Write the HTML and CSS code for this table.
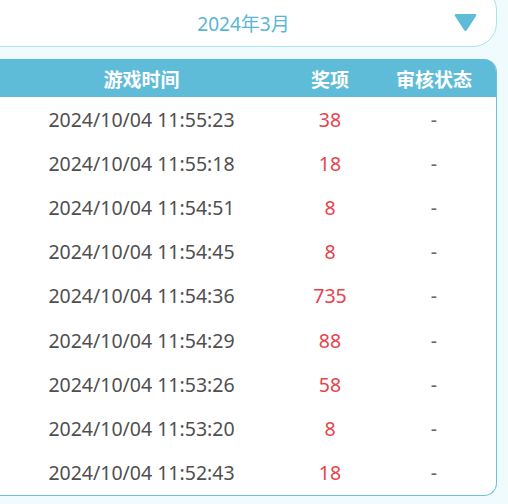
FILE: index.html
```
<!DOCTYPE html>
<html>
<head>
<meta charset="utf-8">
<link rel="stylesheet" href="styles.css">
</head>
<body>
<div class="page">
  <div class="select">
    <span class="select-text">2024年3月</span>
    <svg class="arrow" width="23" height="19" viewBox="0 0 23 19"><path d="M2 1 H21 Q23 1 22 3 L13 17 Q11.5 19 10 17 L1 3 Q0 1 2 1 Z" fill="#5fbcd8"/></svg>
  </div>
  <div class="table">
    <div class="row head">
      <div class="c1">游戏时间</div><div class="c2">奖项</div><div class="c3">审核状态</div>
    </div>
    <div class="row"><div class="c1">2024/10/04 11:55:23</div><div class="c2">38</div><div class="c3">-</div></div>
    <div class="row"><div class="c1">2024/10/04 11:55:18</div><div class="c2">18</div><div class="c3">-</div></div>
    <div class="row"><div class="c1">2024/10/04 11:54:51</div><div class="c2">8</div><div class="c3">-</div></div>
    <div class="row"><div class="c1">2024/10/04 11:54:45</div><div class="c2">8</div><div class="c3">-</div></div>
    <div class="row"><div class="c1">2024/10/04 11:54:36</div><div class="c2">735</div><div class="c3">-</div></div>
    <div class="row"><div class="c1">2024/10/04 11:54:29</div><div class="c2">88</div><div class="c3">-</div></div>
    <div class="row"><div class="c1">2024/10/04 11:53:26</div><div class="c2">58</div><div class="c3">-</div></div>
    <div class="row"><div class="c1">2024/10/04 11:53:20</div><div class="c2">8</div><div class="c3">-</div></div>
    <div class="row"><div class="c1">2024/10/04 11:52:43</div><div class="c2">18</div><div class="c3">-</div></div>
  </div>
</div>
</body>
</html>
```
FILE: styles.css
```
html, body {
  margin: 0;
  padding: 0;
  background: #effbfd;
  overflow: hidden;
}
body {
  width: 508px;
  height: 504px;
  font-family: "Noto Sans", "Noto Sans CJK SC", sans-serif;
}
.page {
  display: flex;
  flex-direction: column;
  margin-left: -10px;
  width: 507px;
}
.select {
  margin-top: -14px;
  margin-left: -14px;
  padding-left: 14px;
  height: 61px;
  box-sizing: border-box;
  background: #fff;
  border: 1px solid #a8e4f4;
  border-radius: 24px;
  display: flex;
  align-items: center;
  justify-content: center;
  position: relative;
}
.select-text {
  color: #5ab6d3;
  font-size: 19px;
  padding-top: 12px;
}
.arrow {
  position: absolute;
  right: 19px;
  top: 26px;
}
.table {
  margin-top: 12px;
  background: #fff;
  border: 1px solid #6cc2dc;
  border-top: none;
  border-radius: 0 13px 13px 0;
  overflow: hidden;
  height: 437px;
  box-sizing: border-box;
}
.row {
  display: grid;
  grid-template-columns: 301px 76px 1fr;
  height: 44.2px;
  align-items: center;
  text-align: center;
  font-size: 19.5px;
  color: #4f4f4f;
}
.row.head {
  height: 38px;
  background: #5fbcd8;
  color: #fff;
  font-weight: bold;
  font-family: "Noto Sans CJK SC", sans-serif;
  font-size: 19px;
}
.c2 { color: #e8434c; }
.c3 { color: #666; padding-left: 4px; }
.head .c2, .head .c3 { color: #fff; }
```
